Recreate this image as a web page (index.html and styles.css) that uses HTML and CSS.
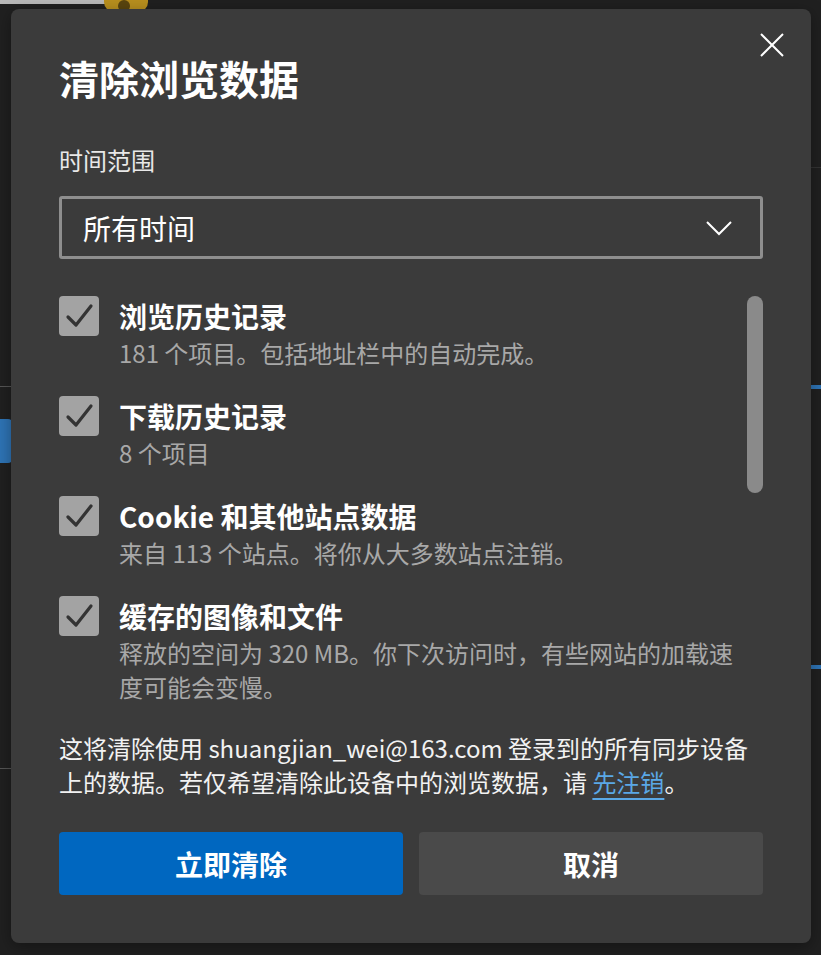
FILE: index.html
```html
<!DOCTYPE html>
<html lang="zh-CN">
<head>
<meta charset="utf-8">
<title>清除浏览数据</title>
<link rel="stylesheet" href="styles.css">
</head>
<body>
<div class="backdrop">
  <div class="bg-topbar"></div>
  <div class="bg-badge"><span class="bg-badge-dot"></span></div>
  <div class="bg-line bg-line-l1"></div>
  <div class="bg-blue bg-blue-l"></div>
  <div class="bg-line bg-line-l2"></div>
  <div class="bg-line bg-line-r0"></div>
  <div class="bg-blue bg-blue-r1"></div>
  <div class="bg-blue bg-blue-r2"></div>
</div>

<div class="dialog" role="dialog" aria-labelledby="dlg-title">
  <button class="close" aria-label="关闭">
    <svg width="24" height="24" viewBox="0 0 24 24"><path d="M1 1 L23 23 M23 1 L1 23" stroke="#ffffff" stroke-width="2" fill="none"/></svg>
  </button>

  <h1 id="dlg-title" class="title">清除浏览数据</h1>

  <div class="label">时间范围</div>
  <div class="select">
    <span class="select-value">所有时间</span>
    <svg class="chevron" width="26" height="16" viewBox="0 0 26 16"><path d="M1 2 L13 14 L25 2" stroke="#ffffff" stroke-width="2" fill="none"/></svg>
  </div>

  <div class="list">
    <div class="items">
      <div class="item">
        <span class="check"><svg width="40" height="40" viewBox="0 0 40 40"><path d="M9 21 L17 29 L32 10" stroke="#333333" stroke-width="3.2" fill="none" stroke-linecap="round" stroke-linejoin="round"/></svg></span>
        <div class="item-text">
          <div class="item-title">浏览历史记录</div>
          <div class="item-sub">181 个项目。包括地址栏中的自动完成。</div>
        </div>
      </div>
      <div class="item">
        <span class="check"><svg width="40" height="40" viewBox="0 0 40 40"><path d="M9 21 L17 29 L32 10" stroke="#333333" stroke-width="3.2" fill="none" stroke-linecap="round" stroke-linejoin="round"/></svg></span>
        <div class="item-text">
          <div class="item-title">下载历史记录</div>
          <div class="item-sub">8 个项目</div>
        </div>
      </div>
      <div class="item">
        <span class="check"><svg width="40" height="40" viewBox="0 0 40 40"><path d="M9 21 L17 29 L32 10" stroke="#333333" stroke-width="3.2" fill="none" stroke-linecap="round" stroke-linejoin="round"/></svg></span>
        <div class="item-text">
          <div class="item-title">Cookie 和其他站点数据</div>
          <div class="item-sub">来自 113 个站点。将你从大多数站点注销。</div>
        </div>
      </div>
      <div class="item">
        <span class="check"><svg width="40" height="40" viewBox="0 0 40 40"><path d="M9 21 L17 29 L32 10" stroke="#333333" stroke-width="3.2" fill="none" stroke-linecap="round" stroke-linejoin="round"/></svg></span>
        <div class="item-text">
          <div class="item-title">缓存的图像和文件</div>
          <div class="item-sub">释放的空间为 320 MB。你下次访问时，有些网站的加载速度可能会变慢。</div>
        </div>
      </div>
    </div>
    <div class="scrolltrack"><div class="thumb"></div></div>
  </div>

  <p class="note">这将清除使用 shuangjian_wei@163.com 登录到的所有同步设备上的数据。若仅希望清除此设备中的浏览数据，请 <a class="link" href="#">先注销</a>。</p>

  <div class="actions">
    <button class="btn btn-primary">立即清除</button>
    <button class="btn btn-secondary">取消</button>
  </div>
</div>
</body>
</html>
```

FILE: styles.css
```css
html, body {
  margin: 0;
  padding: 0;
}
body {
  width: 821px;
  height: 955px;
  overflow: hidden;
  position: relative;
  background: #202020;
  font-family: "Noto Sans CJK SC", "Noto Sans", sans-serif;
  color: #ffffff;
}

/* ---------- page behind the dialog ---------- */
.backdrop {
  position: absolute;
  inset: 0;
}
.bg-topbar {
  position: absolute;
  left: 0; top: 0;
  width: 106px; height: 4px;
  background: #b9b9b9;
}
.bg-badge {
  position: absolute;
  left: 104px; top: -12px;
  width: 44px; height: 24px;
  border-radius: 10px;
  background: #b88f1e;
}
.bg-badge-dot {
  position: absolute;
  left: 14px; top: 12px;
  width: 12px; height: 12px;
  border-radius: 50%;
  background: #5a450e;
}
.bg-line {
  position: absolute;
  height: 1px;
  background: #555555;
}
.bg-line-l1 { left: 0; width: 12px; top: 386px; }
.bg-line-l2 { left: 0; width: 12px; top: 768px; }
.bg-line-r0 { left: 810px; width: 11px; top: 167px; background: #333333; }
.bg-blue {
  position: absolute;
  background: #2e74b5;
}
.bg-blue-l { left: 0; top: 419px; width: 12px; height: 44px; border-radius: 0 4px 4px 0; }
.bg-blue-r1 { left: 810px; top: 385px; width: 11px; height: 4px; }
.bg-blue-r2 { left: 810px; top: 665px; width: 11px; height: 4px; }

/* ---------- dialog ---------- */
.dialog {
  position: absolute;
  left: 11px;
  top: 9px;
  width: 800px;
  box-sizing: border-box;
  padding: 44px 48px 48px 48px;
  background: #3b3b3b;
  border-radius: 8px;
  box-shadow: 0 4px 16px rgba(0, 0, 0, 0.35);
}

.close {
  position: absolute;
  top: 24px;
  right: 27px;
  width: 24px;
  height: 24px;
  padding: 0;
  margin: 0;
  border: 0;
  background: transparent;
  display: flex;
}

.title {
  margin: 0;
  font-size: 40px;
  line-height: 50px;
  font-weight: 700;
  color: #ffffff;
}

.label {
  margin-top: 41px;
  font-size: 24px;
  line-height: 32px;
  color: #e8e8e8;
}

.select {
  margin-top: 20px;
  height: 63px;
  box-sizing: border-box;
  border: 3px solid #8e8e8e;
  border-radius: 3px;
  display: flex;
  align-items: center;
  justify-content: space-between;
  padding: 0 28px 0 21px;
}
.select-value {
  font-size: 28px;
  line-height: 36px;
  color: #ffffff;
}

.list {
  margin-top: 37px;
  display: flex;
  align-items: flex-start;
}
.items {
  flex: 1;
  display: flex;
  flex-direction: column;
  gap: 26px;
  padding-right: 8px;
}
.item {
  display: flex;
  align-items: flex-start;
  gap: 20px;
}
.check {
  flex: none;
  width: 40px;
  height: 40px;
  border-radius: 4px;
  background: #a3a3a3;
  display: flex;
}
.item-text {
  flex: 1;
}
.item-title {
  font-size: 28px;
  line-height: 40px;
  font-weight: 700;
  color: #ffffff;
}
.item-sub {
  font-size: 24px;
  line-height: 34px;
  color: #a8a8a8;
}
.scrolltrack {
  flex: none;
  width: 16px;
}
.thumb {
  height: 197px;
  border-radius: 8px;
  background: #8a8a8a;
}

.note {
  margin: 27px 0 0 0;
  font-size: 24px;
  line-height: 34px;
  color: #f2f2f2;
}
.link {
  color: #5aa8e6;
  text-decoration: underline;
  text-decoration-thickness: 2px;
  text-underline-offset: 6px;
}

.actions {
  margin-top: 33px;
  display: grid;
  grid-template-columns: 1fr 1fr;
  gap: 16px;
}
.btn {
  height: 63px;
  border: 0;
  border-radius: 4px;
  font-family: inherit;
  font-size: 28px;
  font-weight: 700;
  color: #ffffff;
}
.btn-primary { background: #0067c0; }
.btn-secondary { background: #4a4a4a; }
```
